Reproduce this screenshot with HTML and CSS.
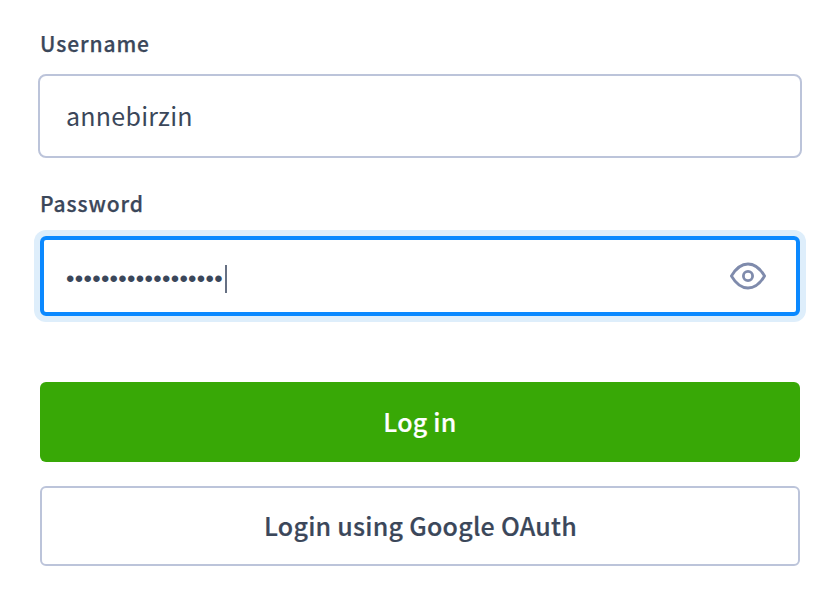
FILE: index.html
```html
<!DOCTYPE html>
<html lang="en">
<head>
<meta charset="utf-8">
<title>Log in</title>
<link rel="stylesheet" href="styles.css">
</head>
<body>
<main class="login">
  <div class="label">Username</div>
  <div class="field"><span class="value">annebirzin</span></div>
  <div class="label label-password">Password</div>
  <div class="field field-focused">
    <span class="dots">••••••••••••••••••</span><span class="caret"></span>
    <svg class="eye" width="40" height="32" viewBox="0 0 40 32" fill="none" stroke="#7f8bac" stroke-width="2.8" stroke-linejoin="round">
      <path d="M3.4 16C8 8.2 13.6 4 20 4S32 8.2 36.6 16C32 23.8 26.4 28 20 28S8 23.8 3.4 16Z"/>
      <circle cx="20" cy="16" r="4.6"/>
    </svg>
  </div>
  <button class="button primary">Log in</button>
  <button class="button secondary">Login using Google OAuth</button>
</main>
</body>
</html>
```
FILE: styles.css
```css
* { box-sizing: border-box; }
body {
  margin: 0;
  background: #fff;
  color: #3b475a;
  font-family: "Noto Sans CJK SC", "Noto Sans", sans-serif;
}
.login {
  display: flex;
  flex-direction: column;
  padding: 27px 36px 0 40px;
}
.label {
  height: 32px;
  line-height: 32px;
  font-size: 21px;
  font-weight: 500;
  letter-spacing: 0.9px;
  -webkit-text-stroke: 0.25px currentColor;
}
.label-password { margin-top: 29px; }
.field {
  display: flex;
  align-items: center;
  height: 84px;
  margin: 15px -2px 0;
  padding: 0 26px;
  border: 2px solid #bcc4da;
  border-radius: 8px;
}
.value {
  margin-top: -2px;
  font-size: 25px;
  line-height: 40px;
  letter-spacing: 0.25px;
}
.field-focused {
  height: 80px;
  margin: 17px 0 0;
  padding: 0 28px 0 22px;
  border: 4px solid #0b89ff;
  border-radius: 6px;
  box-shadow: 0 0 0 6px #deeefb;
}
.dots {
  margin-top: 5px;
  font-family: "Liberation Sans", sans-serif;
  font-size: 24px;
  letter-spacing: 0.32px;
}
.caret {
  width: 2px;
  height: 28px;
  margin: 6px 0 0 2px;
  background: #667083;
}
.eye { margin-left: auto; }
.button {
  height: 80px;
  padding: 0 0 2px;
  border: 0;
  border-radius: 6px;
  font: 500 25px/40px "Noto Sans CJK SC", "Noto Sans", sans-serif;
  letter-spacing: 0.25px;
  -webkit-text-stroke: 0.2px currentColor;
}
.primary {
  margin-top: 66px;
  background: #38a806;
  color: #fff;
}
.secondary {
  margin-top: 24px;
  padding-left: 1px;
  border: 2px solid #bcc4da;
  background: #fff;
  color: #3b475a;
}
```
